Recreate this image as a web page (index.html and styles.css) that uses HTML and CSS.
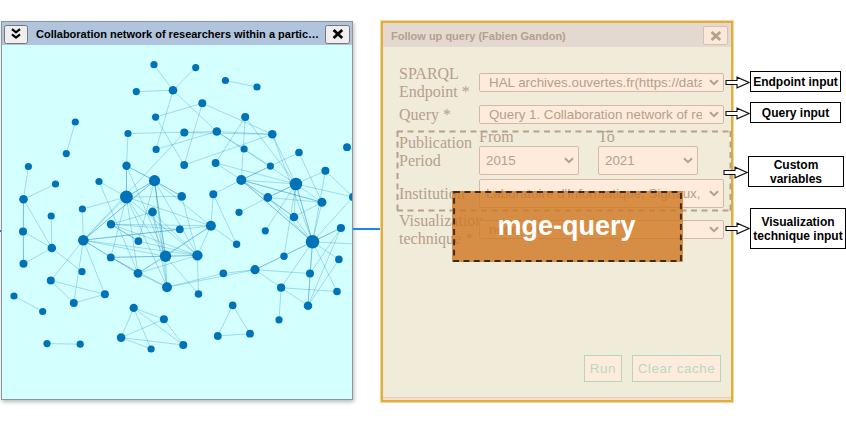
FILE: index.html
```html
<!DOCTYPE html>
<html lang="en">
<head>
<meta charset="utf-8">
<title>Follow up query</title>
<link rel="stylesheet" href="styles.css">
</head>
<body>
<main class="stage">
  <span class="stub"></span>
  <section class="window graph-window">
    <header class="titlebar">
      <span class="tool-btn"><svg width="12" height="12" viewBox="0 0 12 12"><path d="M2 1.2 6 4.4 10 1.2M2 6.4 6 9.6 10 6.4" fill="none" stroke="#000" stroke-width="2.2"/></svg></span>
      <h1 class="title">Collaboration network of researchers within a partic…</h1>
      <span class="tool-btn"><svg width="12" height="12" viewBox="0 0 12 12"><path d="M1.6 2 10.2 10M10.2 2 1.6 10" fill="none" stroke="#000" stroke-width="2.8"/></svg></span>
    </header>
    <svg class="network" id="network" viewBox="2 45 350 354"></svg>
  </section>
  <span class="connector"></span>
  <section class="query-window">
    <div class="query-panel">
      <header class="query-title"><h2>Follow up query (Fabien Gandon)</h2>
        <span class="close"><svg width="12" height="12" viewBox="0 0 12 12"><path d="M1.6 2 10.2 10M10.2 2 1.6 10" fill="none" stroke="#b5a08c" stroke-width="2.8"/></svg></span>
      </header>
      <div class="form">
        <div class="row"><label>SPARQL<br>Endpoint *</label><div class="select wide"><span>HAL archives.ouvertes.fr(https://data.archives</span><svg class="chev" viewBox="0 0 10 7"><path d="M1 1.2 5 5.2 9 1.2"/></svg></div></div>
        <div class="row short"><label>Query *</label><div class="select"><span>Query 1. Collaboration network of researchers</span><svg class="chev" viewBox="0 0 10 7"><path d="M1 1.2 5 5.2 9 1.2"/></svg></div></div>
        <div class="row"><label>Publication<br>Period</label>
          <div class="years">
            <div><p>From</p><div class="select tall"><span>2015</span><svg class="chev" viewBox="0 0 10 7"><path d="M1 1.2 5 5.2 9 1.2"/></svg></div></div>
            <div><p>To</p><div class="select tall"><span>2021</span><svg class="chev" viewBox="0 0 10 7"><path d="M1 1.2 5 5.2 9 1.2"/></svg></div></div>
          </div></div>
        <div class="row"><label>Institution</label><div class="select tall"><span>Laboratoire d'Informatique, Signaux, et Systèmes</span><svg class="chev" viewBox="0 0 10 7"><path d="M1 1.2 5 5.2 9 1.2"/></svg></div></div>
        <div class="row"><label>Visualization<br>technique *</label><div class="select wide"><span>node-links</span><svg class="chev" viewBox="0 0 10 7"><path d="M1 1.2 5 5.2 9 1.2"/></svg></div></div>
      </div>
      <footer class="actions"><span class="btn run">Run</span><span class="btn clear">Clear cache</span></footer>
    </div>
    <svg class="group" viewBox="0 0 336 82"><path d="M1 1.5H335M1 80.5H335M1.5 1V81M334.5 1V81"/></svg>
    <div class="badge"><svg viewBox="0 0 232 72"><path d="M1 1H231V71H1Z"/></svg><strong>mge-query</strong></div>
  </section>
  <aside class="notes">
    <div class="note endpoint"><svg class="arrow" viewBox="0 0 25 13"><path d="M1 4.5H12V1.2L24 6.5 12 11.8V8.5H1Z"/></svg><span>Endpoint input</span></div>
    <div class="note query"><svg class="arrow" viewBox="0 0 25 13"><path d="M1 4.5H12V1.2L24 6.5 12 11.8V8.5H1Z"/></svg><span>Query input</span></div>
    <div class="note custom"><svg class="arrow" viewBox="0 0 25 13"><path d="M1 4.5H12V1.2L24 6.5 12 11.8V8.5H1Z"/></svg><span>Custom<br>variables</span></div>
    <div class="note visual"><svg class="arrow" viewBox="0 0 25 13"><path d="M1 4.5H12V1.2L24 6.5 12 11.8V8.5H1Z"/></svg><span>Visualization<br>technique input</span></div>
  </aside>
</main>
<script src="network.js"></script>
</body>
</html>
```
FILE: styles.css
```css
* { box-sizing: border-box; }
body { margin: 0; background: #fff; overflow: hidden; font-family: "Liberation Sans", Arial, sans-serif; }
h1, h2, p { margin: 0; }
svg { display: block; flex: none; }
.stage { display: flex; align-items: flex-start; width: 846px; height: 423px; padding-top: 21px; }
.stub { flex: none; width: 1px; height: 2px; margin-top: 209px; background: #1a86f5; }
.window { flex: none; width: 352px; height: 379px; border: 1px solid #8e9599; background: #d4ffff; box-shadow: 1px 2px 4px rgba(0,0,0,.28); }
.titlebar { display: flex; align-items: center; height: 23px; padding: 1px 2px 0; background: #b0c4de; gap: 8px; }
.tool-btn { flex: none; display: flex; align-items: center; justify-content: center; width: 24px; height: 19px; border: 1px solid #777; border-radius: 2.5px; background: #efefef; }
.tool-btn:last-child { width: 25px; margin-left: -3px; }
.title { flex: 1; min-width: 0; white-space: nowrap; font-size: 11px; line-height: 14px; }
.network { width: 350px; height: 354px; }
.network line { stroke: #0072b2; stroke-width: 1; opacity: .25; }
.network circle { fill: #0072b8; }
.connector { flex: none; width: 27px; height: 2px; margin-top: 207px; background: #1a86f5; }

.query-window { position: relative; flex: none; width: 354px; height: 382px; color: #b5a08c; background: linear-gradient(90deg, #9b9b94 1px, #b3af98 2px) 0 2px / 2px 375px no-repeat; }
.query-panel { display: flex; flex-direction: column; width: 352px; height: 381px; margin-left: 1px; border: 2px solid #e2ad3d; outline: 1px solid #f0d79b; background: linear-gradient(#ddd0bd, #ddd0bd) 0 374px / 100% 1px no-repeat, linear-gradient(#f1ecd9 374px, #f4e1c8 374px); }
.query-title { display: flex; align-items: center; justify-content: space-between; height: 24px; padding: 1px 3px 0 8px; background: #e4d9d0; }
.query-title h2 { font-size: 11px; line-height: 14px; }
.close { display: flex; align-items: center; justify-content: center; width: 25px; height: 19px; border: 1px solid #d5c2ae; border-radius: 2px; background: #fae9da; }
.form { display: flex; flex-direction: column; gap: 4px; padding: 18px 7px 0 16px; }
.row { display: grid; grid-template-columns: 80px minmax(0, 1fr); align-items: center; }
.row label, .years p { font: 16px/18px "Liberation Serif", serif; white-space: nowrap; }
.row.short { height: 19px; }
.select { display: flex; align-items: center; justify-content: space-between; height: 19px; padding: 0 4px 0 9px; border: 1px solid #d2bba6; border-radius: 2px; background: #feebdb; font-size: 13.33px; line-height: 17px; }
.select.wide { margin-bottom: 1px; }
.select.tall { height: 29px; padding-left: 6px; }
.select span { flex: 1; min-width: 0; overflow: hidden; white-space: nowrap; margin-right: 7px; }
.chev { width: 10px; height: 7px; }
.chev path { fill: none; stroke: #b5a08c; stroke-width: 2; }
.years { display: flex; gap: 19px; }
.years > div { width: 100px; }
.actions { display: flex; justify-content: flex-end; gap: 10px; margin-top: auto; padding: 0 10px 18px 0; }
.btn { display: flex; align-items: center; justify-content: center; height: 27px; border: 1px solid #add9c4; background: #feebdb; color: #b5dac5; font-size: 13.33px; letter-spacing: .6px; }
.run { width: 38px; }
.clear { width: 89px; }
.group { position: absolute; left: 16px; top: 109px; width: 336px; height: 82px; }
.group path { fill: none; stroke: #b5a08c; stroke-width: 2; stroke-dasharray: 6 4.5; }
.badge { position: absolute; left: 72px; top: 170px; display: flex; align-items: center; justify-content: center; width: 231px; height: 71px; background: rgba(208,119,32,.8); color: #fff; }
.badge svg { position: absolute; inset: 0; width: 231px; height: 71px; }
.badge path { fill: none; stroke: #3b2c20; stroke-width: 2; stroke-dasharray: 6 4.5; }
.badge strong { position: relative; font-size: 27px; line-height: 31px; margin-left: -2px; }

.notes { position: relative; display: flex; flex-direction: column; flex: none; width: 121px; margin-left: -9px; padding-top: 50px; font-size: 12px; font-weight: bold; line-height: 14px; text-align: center; }
.note { display: flex; align-items: center; }
.note > span { display: flex; align-items: center; justify-content: center; flex: none; width: 91px; height: 21px; border: 1px solid #000; background: #fff; white-space: nowrap; }
.note.query { margin-top: 10px; }
.note.custom { margin: 33px 0 0 -2px; }
.note.custom > span { width: 96px; height: 31px; }
.note.visual { margin-top: 21px; }
.note.visual > span { width: 96px; height: 41px; }
.arrow { width: 25px; height: 13px; margin-top: 2px; }
.note.visual .arrow { margin-top: -1px; }
.arrow path { fill: #fff; stroke: #111; stroke-width: 1.1; }
```
FILE: network.js
```js
const nodes = {
  A:[154,64.7],B:[136.3,91.6],C:[173,90.3,4.3],D:[195.7,67.6],E:[225.4,80.5],F:[257,87],G:[202.3,103.2,4],H:[155.6,117.1],
  I:[245.2,117,4],J:[128,133.5],K:[184.3,132.6,4],L:[216.8,131.5,4.3],M:[272.3,134.3,4.3],N:[75.3,122],O:[66.3,153.6],
  P:[156.1,149.4],Q:[244.1,149],R:[184.2,165,3.9],S:[215.6,163,3.9],T:[270.4,166.1],U:[299,152.5,3.8],V:[347,147.2,3.9],
  W:[126.5,165.8,4.2],X:[154.5,180.6,5.6],Y:[126.4,197,6.4],Z:[99,181.5],a1:[82.4,209],a2:[83.3,240.2,5.3],a3:[111,224.3,4.2],
  a4:[152.5,212,4.4],a5:[181.7,196.4,4.3],a6:[138.4,241.1,3.9],a7:[179.8,229.3,3.9],a8:[210.9,225.8,5],a9:[165.5,256.3,5.7],
  b1:[197.4,255.4,5.2],b2:[110.8,257.4,3.9],b3:[138,273.3,4.4],b4:[167,287.2,5],b5:[198.5,294,3.8],b6:[223.3,273.4,3.8],
  b7:[255,269.7,4.6],b8:[213.3,194.3,4],b9:[241.3,180,5],c1:[267.8,197.5,4.4],c2:[295.9,184,6.3],c3:[325.4,170.8,4],
  c4:[321.9,202.3,4.5],c5:[294,217,4.3],c6:[239,212.3],c7:[265.3,230.8],c8:[236.6,244.3,3.7],c9:[312.5,241.8,6.8],
  d1:[340.9,228,4.1],d2:[338.9,259.4,3.8],d3:[284,256.2,3.7],d4:[310,273.5,4],d5:[281.1,287.7,4.1],d6:[337,291.5,3.8],
  d7:[308,305.7,4.3],d8:[279,319.8],d9:[353,197,4],x1:[356,244,0],x2:[358,152,0],
  e1:[28.4,166.5],e2:[55.5,184],e3:[23.5,199.3,4.3],e4:[51.2,216],e5:[23,231.5,4],e6:[51.8,248,4.3],e7:[23.5,263.8,4],
  e8:[82,271.7],e9:[50.8,280.5,4],f1:[104.9,294.3,4],f2:[73.8,303,4],f3:[14,296],f4:[42.7,311.5],f5:[47,343.6],f6:[80.2,344.2],
  g1:[133.7,307.9,4.2],g2:[163.9,319.3,4],g3:[121.1,337.6,4.3],g4:[151.1,349],g5:[183.3,345,4],
  h1:[232.7,305.4,3.8],h2:[217.8,336,3.9],h3:[250,333.7,3.9]
};
const links = {
  A:"C",B:"C",C:"D L P",E:"F",G:"H R M",H:"R",I:"S b9 c2",J:"L W",K:"a2 M",
  L:"P M T c2",M:"R c2 c9",N:"O",S:"b9 c2",T:"b9 b9 U",U:"c4",V:"x2",
  c3:"c2 c9 d9",b8:"b9 a8 c8",b9:"c2 c4 c5 c1 c9 c9",c1:"c2 c2 c4 c9 c5 c6",c2:"c4 c5 c9 c9 c7 d9 d3",
  c4:"b9 c5 c9",c5:"c9",c9:"d1 d1 d2 d4 d6 d5 d7 d9 x1 b7 b7",d1:"d4 d7",d2:"d7",d4:"b7 d7",
  d5:"b7 d7 d6 d8",b7:"b6 b4",b6:"b4",
  W:"X X Y Y a9",X:"Y a2 a5 a6 a8 a9 a9 b1 b4 a5",Y:"a2 a5 a8 a9 b1 b2 b3 b4 Z X",Z:"b3",a1:"Y a2",
  a2:"X a8 a7 a9 b1 b2 b3 e9 f1 f2",a3:"a8 a6 a4 b1 a6",a4:"a9 b4 b1",a5:"b1",a6:"b1",a7:"a3",
  a8:"a9 b1 b3 c8",a9:"b1 b2 b3 b4 b5",b1:"b3 b2 b5",b2:"b3 b4",b3:"b4",
  e1:"e3",e2:"e3",e3:"e5 e6 e7",e4:"e6",e5:"e6 e7",e6:"e7 e8",e9:"f1 f2",f1:"f2",f3:"f4",f5:"f6",
  g1:"g2 g3 g4 g5",g2:"g3 g5",g3:"g4 g5",h1:"h2 h3",h2:"h3"
};
const svg = document.getElementById("network");
function add(tag, attrs) {
  const el = document.createElementNS("http://www.w3.org/2000/svg", tag);
  for (const k in attrs) el.setAttribute(k, attrs[k]);
  svg.appendChild(el);
}
for (const from in links) for (const to of links[from].split(" ")) {
  const p = nodes[from], q = nodes[to];
  add("line", {x1:p[0], y1:p[1], x2:q[0], y2:q[1]});
}
for (const id in nodes) {
  const [cx, cy, r = 3.6] = nodes[id];
  if (r) add("circle", {cx, cy, r});
}
```
